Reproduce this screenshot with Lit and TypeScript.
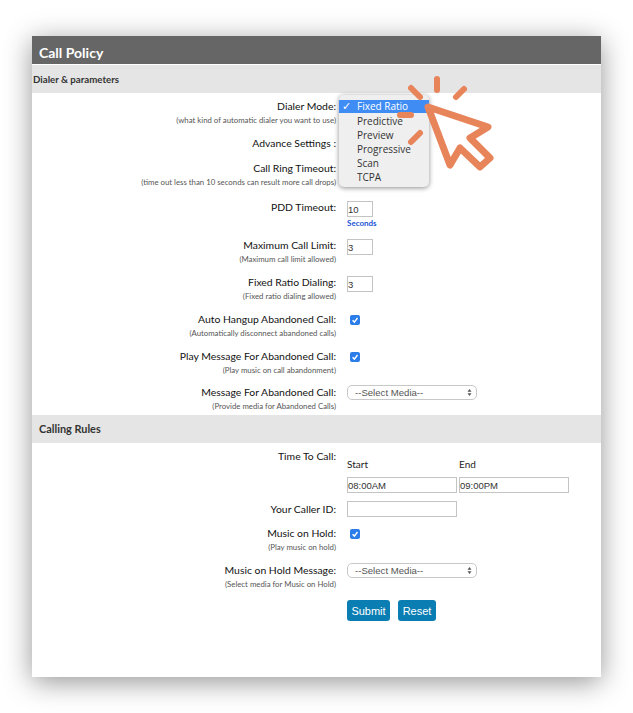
import { LitElement, html, css } from "lit";
import { customElement } from "lit/decorators.js";

const check = html`<span class="check"><svg viewBox="0 0 10 10" width="10" height="10"><path d="M2.6 5.2 4.4 7.1 7.5 3" fill="none" stroke="#fff" stroke-width="1.4"/></svg></span>`;
const select = html`<div class="select"><span>--Select Media--</span><svg viewBox="0 0 6 10" width="5" height="9"><path d="M3 .8 5.4 4H.6zM3 9.2.6 6h4.8z" fill="#555"/></svg></div>`;
const num = (v: string) => html`<input class="num" .value=${v} />`;

@customElement("app-root")
export class AppRoot extends LitElement {
  static styles = css`
    :host { display: block; width: 633px; height: 713px; overflow: hidden; background: #fff; font-family: Lato, "Liberation Sans", sans-serif; color: #222; position: relative; }
    .page { padding: 36px 32px 0; }
    .card { height: 641px; background: #fff; box-shadow: 0 5px 26px rgba(0,0,0,.42); position: relative; }
    .title { height: 28px; background: #666; color: #fff; font-size: 14px; font-weight: 700; line-height: 33px; padding-left: 7px; margin-bottom: 1px; }
    .band { height: 28px; background: #e5e5e5; font-weight: 700; line-height: 28px; color: #333; }
    .band.first { padding-left: 1px; font-size: 9.7px; }
    .band.second { padding-left: 7px; font-size: 10.9px; }
    .rows { display: flex; flex-direction: column; gap: 8px; padding-top: 5px; height: 322px; box-sizing: border-box; }
    .rows.b { height: 157px; }
    .row { display: grid; grid-template-columns: 304px 1fr; column-gap: 11px; }
    .label { text-align: right; font-size: 10.4px; line-height: 16px; color: #111; }
    .sub { font-size: 7.8px; line-height: 13px; color: #555; }
    .ctl { display: flex; flex-direction: column; align-items: flex-start; }
    input { font-family: "Liberation Sans", sans-serif; font-size: 9.5px; color: #333; border: 1px solid #c4c4c4; box-sizing: border-box; padding: 0 1px; margin: 0; background: #fff; outline: none; height: 16px; border-radius: 0; }
    .num { width: 26px; margin-top: 2px; padding: 0; }
    .wide { width: 110px; padding: 0; }
    .sec { font-size: 8px; font-weight: 700; line-height: 13px; color: #1a56d6; }
    .sec.short { line-height: 12px; }
    .check { display: block; width: 10px; height: 10px; background: #2b7de9; border-radius: 2px; margin: 4px 0 0 3px; }
    .check svg { display: block; }
    .select { width: 130px; height: 15px; box-sizing: border-box; border: 1px solid #c8c8c8; border-radius: 5px; background: #fff; display: flex; align-items: center; justify-content: space-between; padding: 0 4px 0 7px; font-family: "Liberation Sans", sans-serif; font-size: 9.6px; color: #555; margin-top: 1px; }
    .h17 { height: 17px; }
    .h28 { height: 28px; }
    .cols { display: grid; grid-template-columns: 112px 110px; font-size: 10px; line-height: 14px; padding-top: 9px; row-gap: 6px; color: #222; }
    .actions { display: flex; gap: 8px; padding-left: 315px; }
    button { height: 21px; border: none; border-radius: 3px; background: #0a7db3; color: #fff; font-family: "Liberation Sans", sans-serif; font-size: 11px; padding: 0; }
    .sb { width: 43px; } .rs { width: 38px; }
    .menu { position: absolute; left: 307px; top: 59px; width: 90px; height: 92px; box-sizing: border-box; background: #efefef; border-radius: 5px; box-shadow: 0 1px 5px rgba(0,0,0,.45); padding-top: 5px; font-family: "Open Sans", sans-serif; font-size: 10px; line-height: 14px; color: #333; }
    .item { padding-left: 18px; height: 14px; position: relative; }
    .item.on { background: #3f8cf5; color: #fff; height: 13px; line-height: 13px; margin-bottom: 1px; }
    .tick { position: absolute; left: 3px; top: 0; font-family: "DejaVu Sans", sans-serif; font-size: 11px; font-weight: 700; }
    .cursor { position: absolute; left: 0; top: 0; pointer-events: none; }
  `;

  private row(label: string, sub: string | null, control: unknown = "") {
    return html`<div class="row">
      <div class="label">${label}${sub ? html`<div class="sub">${sub}</div>` : ""}</div>
      <div class="ctl">${control}</div>
    </div>`;
  }

  render() {
    return html`<div class="page"><div class="card">
      <div class="title">Call Policy</div>
      <div class="band first">Dialer &amp; parameters</div>
      <div class="rows">
        ${this.row("Dialer Mode:", "(what kind of automatic dialer you want to use)")}
        <div class="h17">${this.row("Advance Settings :", null)}</div>
        ${this.row("Call Ring Timeout:", "(time out less than 10 seconds can result more call drops)", html`${num("30")}<div class="sec">Seconds</div>`)}
        ${this.row("PDD Timeout:", null, html`${num("10")}<div class="sec short">Seconds</div>`)}
        ${this.row("Maximum Call Limit:", "(Maximum call limit allowed)", num("3"))}
        ${this.row("Fixed Ratio Dialing:", "(Fixed ratio dialing allowed)", num("3"))}
        ${this.row("Auto Hangup Abandoned Call:", "(Automatically disconnect abandoned calls)", check)}
        <div class="h28">${this.row("Play Message For Abandoned Call:", "(Play music on call abandonment)", check)}</div>
        ${this.row("Message For Abandoned Call:", "(Provide media for Abandoned Calls)", select)}
      </div>
      <div class="band second">Calling Rules</div>
      <div class="rows b">
        ${this.row("Time To Call:", null, html`<div class="cols"><span>Start</span><span>End</span><input class="wide" .value=${"08:00AM"} /><input class="wide" .value=${"09:00PM"} /></div>`)}
        ${this.row("Your Caller ID:", null, html`<input class="wide" />`)}
        ${this.row("Music on Hold:", "(Play music on hold)", check)}
        ${this.row("Music on Hold Message:", "(Select media for Music on Hold)", select)}
      </div>
      <div class="actions"><button class="sb">Submit</button><button class="rs">Reset</button></div>
      <div class="menu">
        <div class="item on"><span class="tick">✓</span>Fixed Ratio</div>
        <div class="item">Predictive</div>
        <div class="item">Preview</div>
        <div class="item">Progressive</div>
        <div class="item">Scan</div>
        <div class="item">TCPA</div>
      </div>
    </div></div>
    <svg class="cursor" width="633" height="713" viewBox="0 0 633 713" fill="none" stroke="#e8845a" stroke-linecap="round" stroke-linejoin="round">
      <path stroke-width="7" d="M428 107 488 127 470 138 490 158 480 167 460 148 450 165Z"/>
      <path stroke-width="6" d="M437 79V90M411 88 420 97M464 89 456 97M400 115H411M420 133 411 142"/>
    </svg>`;
  }
}
